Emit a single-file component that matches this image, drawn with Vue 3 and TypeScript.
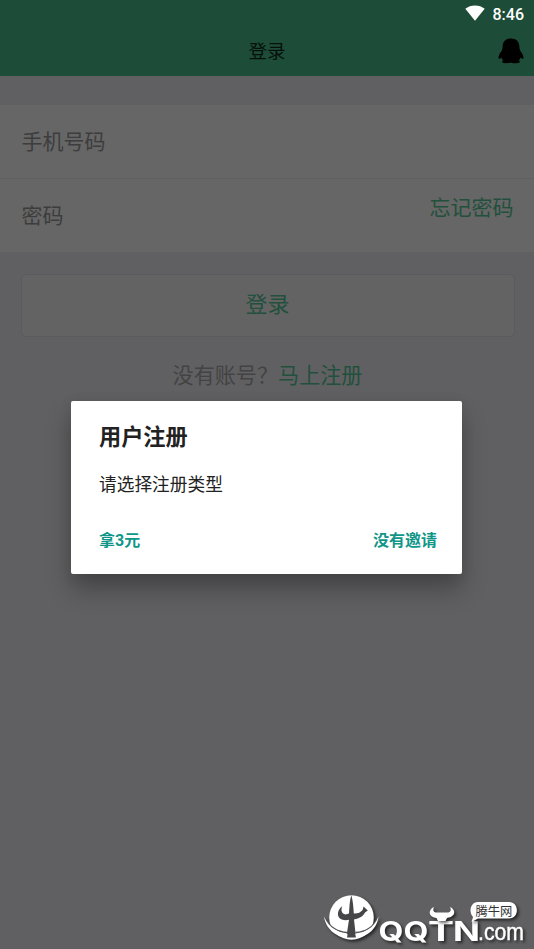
<script setup lang="ts">
import { ref } from 'vue'

const title = ref<string>('登录')
const clock = ref<string>('8:46')
const dialog = {
  title: '用户注册',
  message: '请选择注册类型',
  actions: ['拿3元', '没有邀请'] as string[],
}
</script>

<template>
  <div class="screen">
    <header class="top">
      <div class="status">
        <svg class="wifi" width="20" height="16" viewBox="0 0 20 16">
          <path d="M0.3 3.8 C5.5 -0.7 14.5 -0.7 19.7 3.8 L10 15.8 Z" fill="#fff" />
        </svg>
        <span class="clock">{{ clock }}</span>
      </div>
      <div class="bar">
        <h1 class="bar-title">{{ title }}</h1>
        <svg class="penguin" width="26" height="26" viewBox="0 0 26 26">
          <path
            d="M13 0.4 C7.6 0.4 4.6 3.9 4.6 8.6 L4.6 10.2 C3.9 11.2 3.7 12 3.8 12.8 C1.8 15.2 0.4 17.7 0.5 20 C0.7 21.4 2 20.9 3.3 19.5 C3.7 20.7 4.5 21.7 5.4 22.5 C3.1 23.4 3.6 25.3 7.6 25.3 C10.2 25.3 12 25 13 24.4 C14 25 15.8 25.3 18.4 25.3 C22.4 25.3 22.9 23.4 20.6 22.5 C21.5 21.7 22.3 20.7 22.7 19.5 C24 20.9 25.3 21.4 25.5 20 C25.6 17.7 24.2 15.2 22.2 12.8 C22.3 12 22.1 11.2 21.4 10.2 L21.4 8.6 C21.4 3.9 18.4 0.4 13 0.4 Z"
            fill="#000"
          />
        </svg>
      </div>
    </header>

    <section class="form">
      <div class="field"><span>手机号码</span></div>
      <div class="field second">
        <span>密码</span>
        <a class="forgot">忘记密码</a>
      </div>
    </section>

    <button class="login" type="button">登录</button>
    <p class="signup"><span>没有账号？</span><a>马上注册</a></p>

    <div class="overlay">
      <div class="dialog" role="dialog">
        <h2>{{ dialog.title }}</h2>
        <p>{{ dialog.message }}</p>
        <div class="actions">
          <span v-for="action in dialog.actions" :key="action">{{ action }}</span>
        </div>
      </div>
    </div>

    <svg class="watermark" width="214" height="64" viewBox="320 885 214 64">
      <g class="mark">
        <circle cx="351.5" cy="917.5" r="22.3" fill="#fff" />
        <path
          d="M351.3 895 C349.6 901 349.4 907 349 913.5 L345.5 914.6 C341.5 913.5 340.6 910.5 342.3 906 C338.6 909 336.6 913.5 339 917.5 C341 920 345 920.6 349 919.8 L346.3 937.5 L356 937.5 L354 919.4 C359.5 918.6 363 916.5 365 912.6 L367.8 910.6 L363.6 906.4 L362.6 910 C360.4 912.8 357.5 913.6 353.8 913.4 C353.4 907 353 901 351.3 895 Z"
          fill="#464648"
        />
        <path
          d="M325 918 C331 930.2 342 932.2 347.5 932.6 M355.5 932.6 C361 932.2 372 930.2 378 918"
          fill="none" stroke="#565658" stroke-width="1.6"
        />
        <path
          d="M324 916.5 C326 931 339 937.6 347 938 L347.5 934 C340 933.4 329 928.5 324 916.5 Z M378.5 916.5 C377 931 364 937.6 356 938 L355.5 934 C363 933.4 374 928.5 378.5 916.5 Z"
          fill="#fff"
        />
      </g>
      <g class="mark word">
        <text x="378.5" y="940.5" textLength="25" lengthAdjust="spacingAndGlyphs">Q</text>
        <text x="403.5" y="940.5" textLength="25" lengthAdjust="spacingAndGlyphs">Q</text>
        <text x="428" y="940.5" textLength="26" lengthAdjust="spacingAndGlyphs">T</text>
        <text x="453" y="940.5" textLength="27" lengthAdjust="spacingAndGlyphs">N</text>
      </g>
      <text class="mark com" x="478" y="939.5" textLength="46" lengthAdjust="spacingAndGlyphs">.com</text>
      <path
        class="mark"
        d="M434 907 C427.5 910 428.5 917 436.5 918 L438 921 L445.5 921 L447 918 C455.5 917 456.5 910 450 907 C452 911 450 912.6 446.5 912.6 L437.5 912.6 C434 912.6 432 911 434 907 Z"
        fill="#fff"
      />
      <path
        class="mark"
        d="M478 902 H509 C519.5 902 519.5 918.5 509 918.5 H478 L471.5 922 L473 917 C468.5 913 470 902 478 902 Z"
        fill="#fff"
      />
      <text class="tag" x="475.5" y="915.5">腾牛网</text>
    </svg>
  </div>
</template>

<style>
body {
  margin: 0;
  background: #606062;
}
</style>

<style scoped>
.screen {
  position: relative;
  width: 534px;
  height: 949px;
  overflow: hidden;
  background: #606062;
  font-family: Roboto, 'Noto Sans CJK SC', sans-serif;
}
.top {
  height: 76px;
  background: #1d4d38;
}
.status {
  display: flex;
  justify-content: flex-end;
  align-items: center;
  gap: 8px;
  height: 28px;
  padding-right: 10px;
}
.wifi {
  margin-top: -3px;
}
.clock {
  padding-top: 2px;
  color: #fff;
  font-size: 16px;
  font-weight: 500;
  line-height: 28px;
}
.bar {
  display: grid;
  grid-template-columns: 1fr auto 1fr;
  align-items: center;
  height: 48px;
  padding: 0 10px;
}
.bar-title {
  grid-column: 2;
  margin: 0;
  color: #06100b;
  font-size: 18.5px;
  font-weight: 400;
  line-height: 48px;
}
.penguin {
  justify-self: end;
  margin-top: -2px;
}
.form {
  margin-top: 29px;
  background: #666;
}
.field {
  display: flex;
  justify-content: space-between;
  height: 73px;
  padding: 0 20.5px 0 21.5px;
  border-bottom: 1px solid #606062;
  color: #3d3d3d;
  font-size: 21px;
  font-weight: 400;
  line-height: 74px;
}
.field.second {
  border-bottom: 0;
  line-height: 74px;
}
.field .forgot {
  line-height: 58px;
}
.forgot,
.signup a {
  color: #22503c;
}
.login {
  display: block;
  box-sizing: border-box;
  width: 494px;
  height: 63px;
  margin: 22px 0 0 21px;
  padding: 0 1px 1px 0;
  border: 1px solid #5b5b5d;
  border-radius: 5px;
  background: #636363;
  color: #22503c;
  font: 400 22px / 58px Roboto, 'Noto Sans CJK SC', sans-serif;
}
.signup {
  display: flex;
  justify-content: center;
  margin: 23px 0 0;
  padding-left: 1px;
  color: #434343;
  font-size: 21.1px;
  font-weight: 400;
  line-height: 32px;
}
.overlay {
  position: absolute;
  inset: 0;
  display: flex;
  align-items: flex-start;
  padding: 401px 72px 0 71px;
}
.dialog {
  box-sizing: border-box;
  flex: 1;
  height: 173px;
  padding: 20px 25px 0 28px;
  border-radius: 2px;
  background: #fff;
  box-shadow: 0 16px 24px rgba(0, 0, 0, 0.27), 0 2px 14px rgba(0, 0, 0, 0.08);
  color: #222;
}
.dialog h2 {
  margin: 0;
  font-size: 22.2px;
  font-weight: 700;
  line-height: 32px;
}
.dialog p {
  margin: 19px 0 0;
  font-size: 17.7px;
  line-height: 27px;
}
.actions {
  display: flex;
  justify-content: space-between;
  margin-top: 30px;
  color: #109688;
  font-size: 16px;
  font-weight: 700;
  line-height: 24px;
}
.watermark {
  position: absolute;
  right: 0;
  bottom: 0;
}
.mark {
  filter: drop-shadow(2px 2px 1.5px rgba(0, 0, 0, 0.6));
}
.word {
  fill: #fff;
  font-family: Inter, sans-serif;
  font-size: 27px;
  font-weight: 700;
}
.com {
  fill: #fff;
  stroke: #fff;
  stroke-width: 0.4px;
  font-family: 'Liberation Sans', sans-serif;
  font-size: 23px;
}
.tag {
  fill: #333;
  font-family: 'Noto Sans CJK SC', sans-serif;
  font-size: 12.3px;
}
</style>
